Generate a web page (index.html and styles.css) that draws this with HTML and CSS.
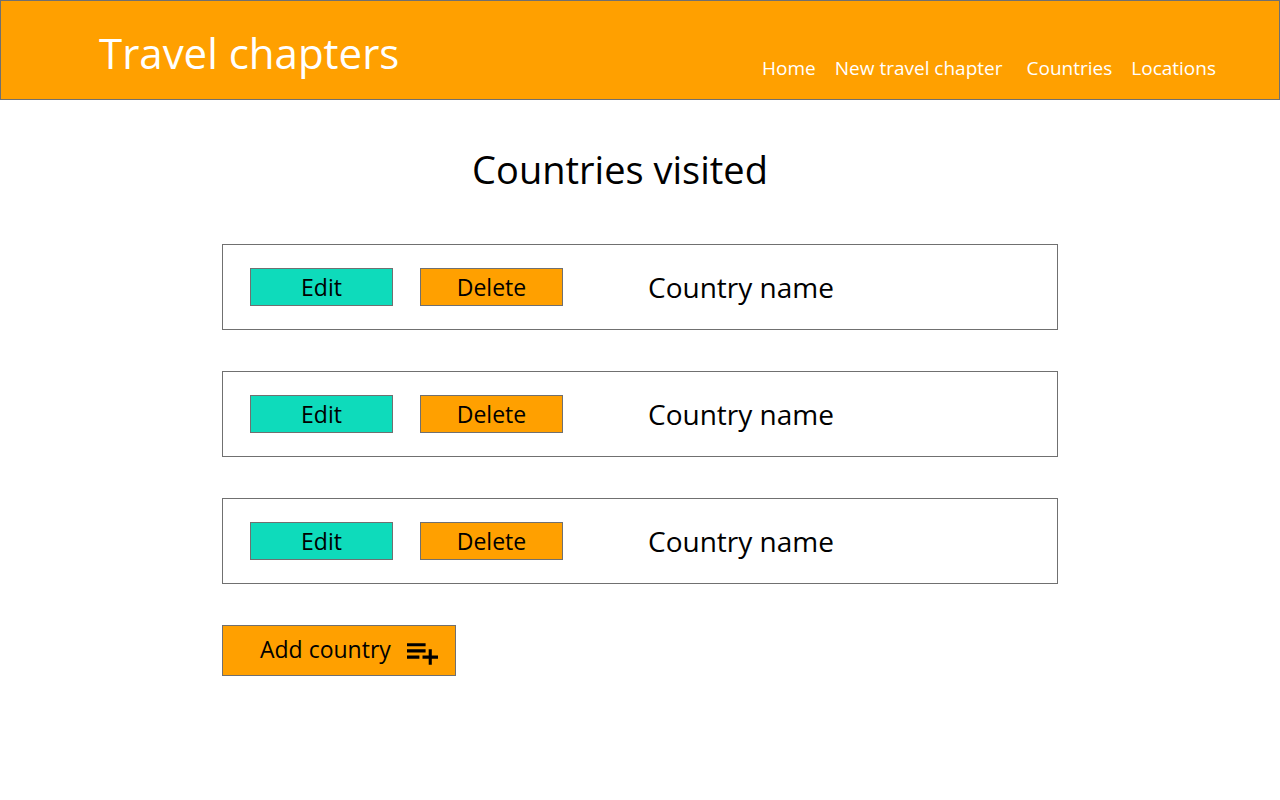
FILE: index.html
```html
<!DOCTYPE html>
<html lang="en">
<head>
<meta charset="utf-8">
<meta name="viewport" content="width=device-width, initial-scale=1">
<title>Travel chapters</title>
<link rel="stylesheet" href="styles.css">
</head>
<body>
<header class="site-header">
  <div class="site-title">Travel chapters</div>
  <nav class="site-nav">
    <a href="#">Home</a>
    <a href="#" class="nav-wide">New travel chapter</a>
    <a href="#">Countries</a>
    <a href="#">Locations</a>
  </nav>
</header>
<main class="content">
  <h1 class="page-title">Countries visited</h1>
  <ul class="country-list">
    <li class="country">
      <button type="button" class="btn btn-edit">Edit</button>
      <button type="button" class="btn btn-delete">Delete</button>
      <span class="country-name">Country name</span>
    </li>
    <li class="country">
      <button type="button" class="btn btn-edit">Edit</button>
      <button type="button" class="btn btn-delete">Delete</button>
      <span class="country-name">Country name</span>
    </li>
    <li class="country">
      <button type="button" class="btn btn-edit">Edit</button>
      <button type="button" class="btn btn-delete">Delete</button>
      <span class="country-name">Country name</span>
    </li>
  </ul>
  <button type="button" class="btn-add">
    <span>Add country</span>
    <svg class="icon-add" viewBox="2 6 20 14" aria-hidden="true"><path d="M14 10H2v2h12v-2zm0-4H2v2h12V6zm4 8v-4h-2v4h-4v2h4v4h2v-4h4v-2h-4zM2 16h8v-2H2v2z"/></svg>
  </button>
</main>
</body>
</html>
```

FILE: styles.css
```css
* {
  box-sizing: border-box;
}

body {
  margin: 0;
  background: #fff;
  color: #000;
  font-family: "Open Sans", "Noto Sans", sans-serif;
}

.site-header {
  display: flex;
  justify-content: space-between;
  align-items: flex-end;
  min-height: 100px;
  padding: 0 63px 17px 98px;
  background: #ffa000;
  border: 1px solid #707070;
  color: #fff;
}

.site-title {
  font-size: 42px;
  line-height: 58px;
}

.site-nav {
  display: flex;
  gap: 19px;
  font-size: 19px;
  line-height: 28px;
}

.site-nav a {
  color: inherit;
  text-decoration: none;
}

.nav-wide {
  margin-right: 5px;
}

.content {
  max-width: 836px;
  margin: 0 auto;
  padding-top: 41px;
}

.page-title {
  margin: 0 40px 47px 0;
  font-size: 38px;
  font-weight: 400;
  line-height: 56px;
  text-align: center;
}

.country-list {
  display: grid;
  gap: 41px;
  margin: 0 0 41px;
  padding: 0;
  list-style: none;
}

.country {
  display: flex;
  align-items: center;
  min-height: 86px;
  padding: 0 27px;
  border: 1px solid #707070;
}

.btn,
.btn-add {
  border: 1px solid #707070;
  background: #ffa000;
  color: #000;
  font-family: inherit;
  font-size: 23px;
}

.btn {
  width: 143px;
  height: 38px;
  margin-right: 27px;
  padding: 0;
  line-height: 36px;
}

.btn-edit {
  background: #0edbbb;
}

.country-name {
  margin-left: 58px;
  font-size: 28px;
  line-height: 40px;
}

.btn-add {
  display: flex;
  align-items: center;
  justify-content: space-between;
  width: 234px;
  height: 51px;
  padding: 0 17px 0 37px;
  line-height: 32px;
}

.btn-add span {
  padding-bottom: 3px;
}

.icon-add {
  width: 31px;
  height: 22px;
  margin-top: 6px;
}
```
